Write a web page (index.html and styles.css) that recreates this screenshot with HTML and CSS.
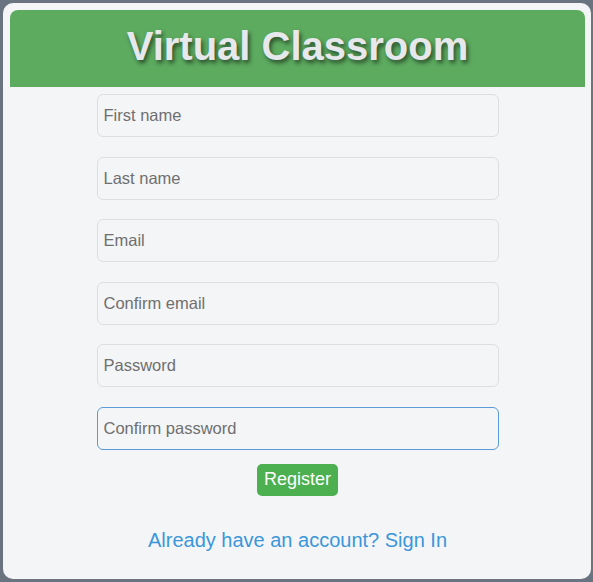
FILE: index.html
```html
<!DOCTYPE html>
<html>
<head>
<meta charset="utf-8">
<link rel="stylesheet" href="styles.css">
</head>
<body>
<div class="card">
  <header class="header"><h1 class="title">Virtual Classroom</h1></header>
  <form class="form">
    <input class="field" type="text" placeholder="First name">
    <input class="field" type="text" placeholder="Last name">
    <input class="field" type="email" placeholder="Email">
    <input class="field" type="email" placeholder="Confirm email">
    <input class="field" type="password" placeholder="Password">
    <input class="field focused" type="password" placeholder="Confirm password">
    <button class="btn" type="button">Register</button>
  </form>
  <a class="link" href="#">Already have an account? Sign In</a>
</div>
</body>
</html>
```
FILE: styles.css
```css
html, body { margin: 0; padding: 0; }
body {
  background: #6a7480;
  font-family: "Liberation Sans", Arial, sans-serif;
  width: 593px;
  height: 582px;
  overflow: hidden;
  box-sizing: border-box;
  padding: 3px 2px 3px 3px;
}
.card {
  background: #f4f5f7;
  border-radius: 10px;
  height: 576px;
  box-sizing: border-box;
  padding: 7px 6px 0 7px;
  display: flex;
  flex-direction: column;
  align-items: center;
}
.header {
  align-self: stretch;
  background: #5cab5f;
  border-radius: 8px 8px 0 0;
  height: 77px;
  display: flex;
  align-items: center;
  justify-content: center;
}
.title {
  margin: 0;
  font-size: 40px;
  font-weight: bold;
  color: #e6e8ec;
  text-shadow: 2px 3px 4px rgba(0,0,0,0.55);
  position: relative;
  top: -2px;
}
.form {
  margin-top: 7px;
  display: flex;
  flex-direction: column;
  align-items: center;
  gap: 19.6px;
}
.field {
  width: 402px;
  height: 43px;
  box-sizing: border-box;
  border: 1px solid #dcdee2;
  border-radius: 6px;
  background: #f4f5f7;
  padding: 0 6px;
  font-family: "Liberation Sans", Arial, sans-serif;
  font-size: 16.5px;
  color: #333;
  outline: none;
}
.field::placeholder { color: #6f6f6f; }
.field.focused { border-color: #5b9bd8; }
.btn {
  margin-top: -6px;
  background: #4caf50;
  color: #fff;
  border: none;
  border-radius: 5px;
  height: 32px;
  padding: 0 6.5px;
  font-family: "Liberation Sans", Arial, sans-serif;
  font-size: 18px;
}
.link {
  margin-top: 33px;
  color: #3b97d9;
  text-decoration: none;
  font-size: 20px;
}
```
